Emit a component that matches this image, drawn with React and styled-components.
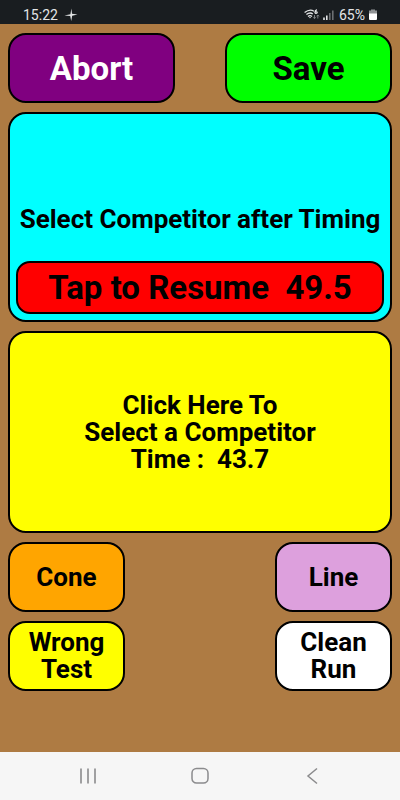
import styled, { createGlobalStyle } from "styled-components";

export default function App() {
  return (
    <>
      <GlobalStyle />
      <Screen>
        <StatusBar>
          <StatusGroup $gap="6px">
            15:22
            <svg width="14" height="14" viewBox="0 0 14 14" fill="#e4e6e7">
              <path d="M7.4 0.5 L8 5.8 L13.5 6.4 L8.2 7.8 L7.2 13 L6.2 8.1 L0.4 7.4 L6.4 6.2 Z" />
            </svg>
          </StatusGroup>
          <StatusGroup $gap="3px">
            <svg width="32" height="14" viewBox="0 0 32 14" fill="none" stroke="#e4e6e7">
              <path d="M0.6 4.6 Q5.6 0.6 10 3.2" strokeWidth="1.3" />
              <path d="M2.4 6.6 Q5.8 3.8 8.8 6" strokeWidth="1.3" />
              <path d="M4 8.4 Q6 6.8 8 8.4" strokeWidth="1.3" />
              <path d="M5 9 L6 10.4 L7 9 Z" fill="#e4e6e7" stroke="none" />
              <path d="M12.8 1.6 Q10.8 2.4 10.9 4.6 Q11.8 6.2 13.2 4.8 Q13.2 3.2 11 3.8" strokeWidth="1.2" />
              <path d="M10.5 7 V10.5 M9.3 9.3 L10.5 10.7 L11.7 9.3" stroke="#7d8184" />
              <path d="M13.8 10.5 V7 M12.6 8.3 L13.8 7 L15 8.3" stroke="#7d8184" />
              <path d="M20 9.5 V12 M22.8 7.5 V12" strokeWidth="1.6" />
              <path d="M25.8 5 V12 M28.8 2.5 V12" stroke="#6b6f72" strokeWidth="1.6" />
            </svg>
            65%
            <svg width="10" height="12" viewBox="0 0 10 12">
              <path d="M3 0.5 H7 V1.5 H9 V6 H1 V1.5 H3 Z" fill="#909395" />
              <path d="M1 4.5 H9 V10 Q9 11 8 11 H2 Q1 11 1 10 Z" fill="#ffffff" />
            </svg>
          </StatusGroup>
        </StatusBar>

        <Main>
          <Row>
            <ActionButton $bg="purple" $color="#fff" $large>Abort</ActionButton>
            <ActionButton $bg="lime" $large>Save</ActionButton>
          </Row>

          <TimerPanel>
            <TimerText>Select Competitor after Timing</TimerText>
            <ResumeButton>Tap to Resume{"  "}49.5</ResumeButton>
          </TimerPanel>

          <CompetitorButton>
            {"Click Here To\nSelect a Competitor\nTime :  43.7"}
          </CompetitorButton>

          <Row>
            <ActionButton $bg="orange">Cone</ActionButton>
            <ActionButton $bg="plum">Line</ActionButton>
          </Row>
          <Row>
            <ActionButton $bg="yellow">{"Wrong\nTest"}</ActionButton>
            <ActionButton $bg="white">{"Clean\nRun"}</ActionButton>
          </Row>
        </Main>

        <NavBar>
          <NavButton aria-label="Recent apps">
            <svg width="18" height="18" viewBox="0 0 18 18" fill="none" stroke="#8b8b8d" strokeWidth="1.6">
              <path d="M2 1.5 V16.5 M9 1.5 V16.5 M16 1.5 V16.5" />
            </svg>
          </NavButton>
          <NavButton aria-label="Home">
            <svg width="18" height="18" viewBox="0 0 18 18" fill="none" stroke="#8b8b8d" strokeWidth="1.5">
              <rect x="1" y="1.5" width="16" height="14.5" rx="4.5" />
            </svg>
          </NavButton>
          <NavButton aria-label="Back">
            <svg width="18" height="18" viewBox="0 0 18 18" fill="none" stroke="#8b8b8d" strokeWidth="1.5">
              <path d="M14 1.5 L5 9 L14 16.5" />
            </svg>
          </NavButton>
        </NavBar>
      </Screen>
    </>
  );
}


const GlobalStyle = createGlobalStyle`
  * {
    box-sizing: border-box;
  }

  body {
    margin: 0;
    font-family: Roboto, sans-serif;
  }
`
const Screen = styled.div`
  display: flex;
  flex-direction: column;
  min-height: 100vh;
  background-color: #ae7b43;
`
const StatusBar = styled.header`
  display: flex;
  justify-content: space-between;
  align-items: center;
  height: 24px;
  padding: 6px 22px 0px 23px;
  background-color: #191d20;
`
const StatusGroup = styled.div`
  display: flex;
  align-items: center;
  gap: ${(props) => props.$gap};
  color: #e4e6e7;
  font-size: 14px;
  line-height: 16px;
`
const Main = styled.main`
  display: flex;
  flex-direction: column;
  flex: 1;
  gap: 9px;
  padding: 9px 8px;
`
const Row = styled.div`
  display: flex;
  justify-content: space-between;
`
const Button = styled.button`
  border: 2px solid #000;
  border-radius: 18px;
  padding: 0;
  color: #000;
  font-family: inherit;
  font-size: 26px;
  font-weight: bold;
  line-height: 27px;
  white-space: pre-wrap;
  cursor: pointer;
`
const ActionButton = styled(Button)`
  width: ${(props) => (props.$large ? "167px" : "117px")};
  height: 70px;
  background-color: ${(props) => props.$bg};
  color: ${(props) => props.$color || "#000"};
  font-size: ${(props) => (props.$large ? "33px" : "26px")};
`
const TimerPanel = styled.section`
  display: flex;
  flex-direction: column;
  justify-content: flex-end;
  gap: 28px;
  height: 210px;
  padding: 6px;
  border: 2px solid #000;
  border-radius: 18px;
  background-color: cyan;
`
const TimerText = styled.p`
  margin: 0;
  font-size: 26px;
  font-weight: bold;
  line-height: 27px;
  text-align: center;
  white-space: nowrap;
`
const ResumeButton = styled(Button)`
  height: 53px;
  border-radius: 14px;
  background-color: red;
  font-size: 33px;
`
const CompetitorButton = styled(Button)`
  height: 202px;
  background-color: yellow;
`
const NavBar = styled.nav`
  display: flex;
  justify-content: space-around;
  align-items: center;
  height: 48px;
  padding: 0px 32px;
  background-color: #f6f6f6;
`
const NavButton = styled.button`
  display: flex;
  justify-content: center;
  align-items: center;
  width: 48px;
  height: 48px;
  padding: 0;
  border: none;
  background: none;
  cursor: pointer;
`
